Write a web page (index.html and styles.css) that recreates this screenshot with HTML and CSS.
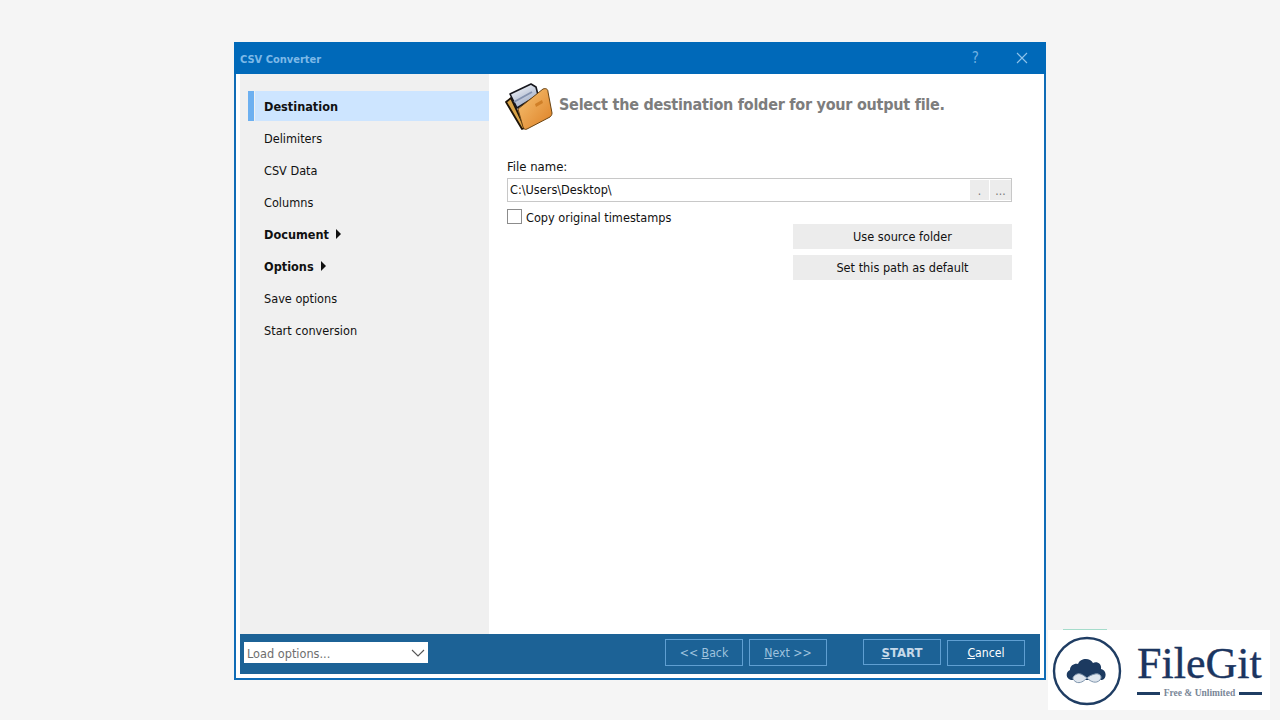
FILE: index.html
```html
<!DOCTYPE html>
<html lang="en">
<head>
<meta charset="utf-8">
<title>CSV Converter</title>
<link rel="stylesheet" href="styles.css">
</head>
<body>
<div class="window">
  <header class="titlebar">
    <span class="title">CSV Converter</span>
    <span class="help">?</span>
    <svg class="close" width="12" height="12" viewBox="0 0 12 12"><path d="M1 1L11 11M11 1L1 11" stroke="#8fc3ea" stroke-width="1.1" fill="none"/></svg>
  </header>
  <div class="client">
    <div class="main">
      <nav class="sidebar">
        <div class="nav-item active"><span class="marker"></span><span class="nav-fill">Destination</span></div>
        <div class="nav-item">Delimiters</div>
        <div class="nav-item">CSV Data</div>
        <div class="nav-item">Columns</div>
        <div class="nav-item strong">Document<span class="arrow"></span></div>
        <div class="nav-item strong">Options<span class="arrow"></span></div>
        <div class="nav-item">Save options</div>
        <div class="nav-item">Start conversion</div>
      </nav>
      <section class="content">
        <div class="heading">
          <svg class="folder" width="48" height="48" viewBox="0 0 48 48">
            <defs>
              <linearGradient id="fg" x1="0" y1="0" x2="1" y2="1"><stop offset="0" stop-color="#f7c475"/><stop offset="1" stop-color="#dd7f24"/></linearGradient>
              <linearGradient id="pg" x1="0" y1="0" x2="0.6" y2="1"><stop offset="0" stop-color="#ffffff"/><stop offset="1" stop-color="#9aa8c4"/></linearGradient>
            </defs>
            <path d="M1 19L6 15L20 45L17 46Z" fill="#d9a347" stroke="#1e1408" stroke-width="1.8" stroke-linejoin="round"/>
            <path d="M5 11L26 1L31 4L33 12L12 25Z" fill="url(#pg)" stroke="#17171d" stroke-width="1.6" stroke-linejoin="round"/>
            <path d="M9 19L27 9" stroke="#8593b0" stroke-width="2" fill="none"/>
            <path d="M13 26L38 6C41 5 43 6 43 9L47 30C47 32 46 33 45 34L22 46C20 47 19 46 18 44Z" fill="url(#fg)" stroke="#6b4412" stroke-width="1" stroke-linejoin="round"/>
            <path d="M30 21L37 17L38 20L31 24Z" fill="#d07f28"/>
          </svg>
          <h1>Select the destination folder for your output file.</h1>
        </div>
        <label class="field-label">File name:</label>
        <div class="path-box">
          <span class="path-text">C:\Users\Desktop\</span>
          <span class="path-btn">.</span>
          <span class="path-btn">...</span>
        </div>
        <div class="check-row"><span class="checkbox"></span><span class="check-label">Copy original timestamps</span></div>
        <div class="actions">
          <div class="action-btn">Use source folder</div>
          <div class="action-btn">Set this path as default</div>
        </div>
      </section>
    </div>
    <footer class="footer">
      <div class="combo">
        <span class="combo-text">Load options...</span>
        <svg width="14" height="8" viewBox="0 0 14 8"><path d="M1 1L7 7L13 1" stroke="#555" stroke-width="1.1" fill="none"/></svg>
      </div>
      <div class="buttons">
        <div class="btn dim"><span>&lt;&lt; <u>B</u>ack</span></div>
        <div class="btn dim"><span><u>N</u>ext &gt;&gt;</span></div>
        <div class="btn start"><span><u>S</u>TART</span></div>
        <div class="btn cancel"><span><u>C</u>ancel</span></div>
      </div>
    </footer>
  </div>
</div>
<aside class="logo">
  <svg class="logo-mark" width="70" height="70" viewBox="0 0 70 70">
    <circle cx="35" cy="35" r="33" fill="#fff" stroke="#1f3d63" stroke-width="2.4"/>
    <path d="M19 44C14 43 13 36 18 34C18 29 23 27 26 28C28 22 38 21 41 27C45 25 50 28 49 33C55 34 55 43 50 44Z" fill="#1c3a60"/>
    <path d="M22 40C27 35 31 39 35 42C39 46 44 48 48 44C51 40 47 37 43 38C39 39 37 40 35 42C32 45 28 48 24 46C21 44 20 42 22 40Z" fill="#dfe6ee" stroke="#7f95ad" stroke-width="1"/>
  </svg>
  <div class="logo-text">
    <div class="logo-name">FileGit</div>
    <div class="logo-sub"><span class="rule"></span><span class="tag">Free &amp; Unlimited</span><span class="rule"></span></div>
  </div>
</aside>
</body>
</html>
```
FILE: styles.css
```css
* { box-sizing: border-box; }
html, body { margin: 0; height: 100%; }
body {
  background: #f5f5f5;
  padding: 42px 0 0 234px;
  font-family: "DejaVu Sans Condensed", "DejaVu Sans", sans-serif;
  font-size: 12.6px;
  color: #111;
  overflow: hidden;
  position: relative;
}
.window {
  width: 812px;
  height: 638px;
  background: #fff;
  border: 2px solid #0f6cb6;
  border-top: 0;
  display: flex;
  flex-direction: column;
}
.titlebar {
  height: 32px;
  margin: 0 -2px;
  background: #0069b9;
  display: flex;
  align-items: center;
  padding: 2px 18px 0 6px;
  flex: none;
}
.title { color: #7db9e8; font-weight: bold; font-size: 11px; flex: 1; }
.help { color: #6fb0e2; font-size: 15px; margin-right: 37px; margin-top: -2px; }
.close { margin-top: -2px; }
.client {
  flex: 1;
  padding: 0 4px 4px;
  display: flex;
  flex-direction: column;
  min-height: 0;
}
.main { flex: 1; display: flex; min-height: 0; }
.sidebar {
  width: 249px;
  background: #f0f0f0;
  padding-top: 17px;
  flex: none;
}
.nav-item {
  height: 32px;
  padding: 0 0 2px 24px;
  display: flex;
  align-items: center;
}
.nav-item.strong { font-weight: bold; }
.nav-item.active {
  height: 30px;
  margin-bottom: 2px;
  padding: 0 0 0 8px;
  font-weight: bold;
  align-items: stretch;
}
.marker { width: 6px; background: #6db0f0; margin-right: 1px; flex: none; }
.nav-fill { flex: 1; background: #cde5ff; display: flex; align-items: center; padding-left: 9px; }
.arrow {
  width: 0;
  height: 0;
  margin-left: 7px;
  border-left: 5px solid #111;
  border-top: 5px solid transparent;
  border-bottom: 5px solid transparent;
}
.content { flex: 1; padding: 9px 28px 0 18px; display: flex; flex-direction: column; }
.heading { display: flex; align-items: center; height: 48px; margin-left: -2px; }
.folder { flex: none; margin-right: 6px; }
h1 { margin: 0 0 6px; font-size: 16px; letter-spacing: -0.25px; font-weight: bold; color: #7d7d7d; white-space: nowrap; }
.field-label { margin-top: 27px; height: 18px; line-height: 18px; font-size: 13px; }
.path-box {
  margin-top: 2px;
  height: 24px;
  border: 1px solid #c8c8c8;
  display: flex;
  align-items: stretch;
  gap: 1px;
}
.path-text { flex: 1; padding-left: 2px; line-height: 21px; }
.path-btn { width: 19px; background: #ececec; margin: 1px 0; color: #777; text-align: center; line-height: 22px; font-size: 12px; }
.path-btn:last-child { width: 21px; }
.check-row { display: flex; align-items: flex-start; margin-top: 7px; height: 15px; gap: 4px; }
.check-label { line-height: 17px; white-space: nowrap; }
.checkbox { width: 15px; height: 15px; border: 1px solid #8c8c8c; background: #fff; }
.actions { align-self: flex-end; width: 219px; display: flex; flex-direction: column; gap: 6px; }
.action-btn { height: 25px; background: #ececec; display: flex; align-items: center; justify-content: center; }
.footer {
  height: 40px;
  background: #1c6296;
  display: flex;
  align-items: flex-start;
  justify-content: space-between;
  padding: 5px 15px 0 4px;
  flex: none;
}
.combo {
  width: 184px;
  height: 21px;
  margin-top: 3px;
  background: #fff;
  color: #6e6e6e;
  display: flex;
  align-items: center;
  justify-content: space-between;
  padding: 0 3px;
}
.combo-text { padding-top: 2px; }
.buttons { display: flex; gap: 6px; align-items: flex-start; }
.btn {
  width: 78px;
  height: 27px;
  border: 1px solid #5f9fd2;
  color: #c9dff0;
  font-size: 12.2px;
  display: flex;
  align-items: center;
  justify-content: center;
  white-space: pre;
}
.btn.dim { color: #9fc2de; }
.btn.start { margin-left: 30px; font-weight: bold; font-size: 13px; color: #c6d9e9; height: 26px; }
.btn.cancel { color: #fff; height: 26px; margin-top: 1px; }
.logo {
  position: absolute;
  left: 1048px;
  top: 630px;
  width: 222px;
  height: 80px;
  background: #fff;
  display: flex;
  align-items: center;
  padding-left: 4px;
}
.logo::before {
  content: "";
  position: absolute;
  left: 15px;
  top: -1px;
  width: 44px;
  height: 1px;
  background: #a5dccb;
}
.logo-mark { flex: none; margin-top: 2px; }
.logo-text { margin-left: 15px; color: #1b3560; width: 125px; }
.logo-name { font-family: "Liberation Serif", serif; font-size: 44px; line-height: 44px; -webkit-text-stroke: 0.4px #1b3560; white-space: nowrap; }
.logo-sub { display: flex; align-items: center; justify-content: space-between; margin-top: 2px; }
.rule { width: 23px; height: 3px; background: #1f3d63; }
.tag { font-family: "Liberation Serif", serif; font-weight: bold; font-size: 9.5px; color: #7a8798; white-space: nowrap; }
```
